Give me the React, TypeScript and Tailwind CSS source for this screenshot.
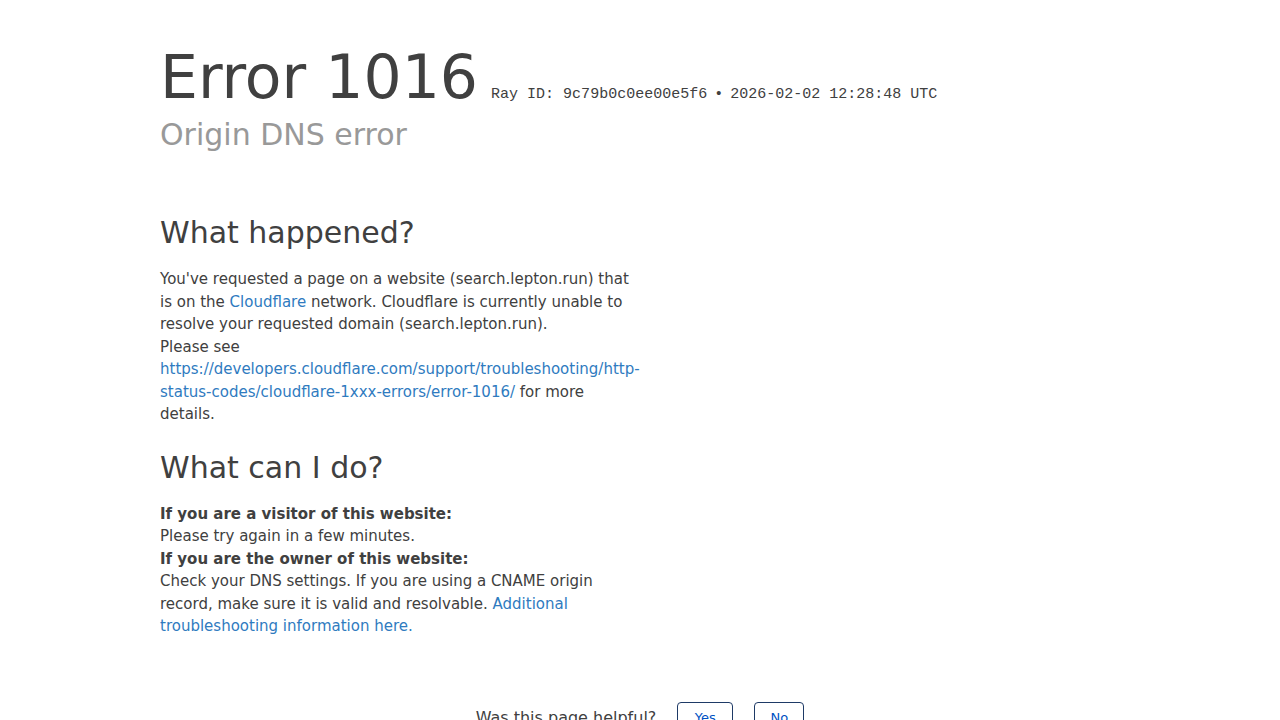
const sans = "font-['DejaVu_Sans',sans-serif]";

export default function App() {
  return (
    <div className={`min-h-screen bg-white text-[#404040] ${sans}`}>
      <div className="mx-auto w-[960px] pt-[47px]">
        <header>
          <h1 className="text-[60px] leading-[60px] font-normal whitespace-nowrap">
            Error 1016{" "}
            <small className="-ml-[6px] font-['Liberation_Mono',monospace] text-[15px] leading-none">
              Ray ID: 9c79b0c0ee00e5f6 <span className="-mx-[2px]">&bull;</span> 2026-02-02 12:28:48 UTC
            </small>
          </h1>
          <h2 className="mt-[10px] text-[30px] leading-[36px] text-[#999999]">Origin DNS error</h2>
        </header>

        <section className="w-[480px] text-[15px] leading-[22.5px]">
          <h2 className="mt-[62px] text-[30px] leading-[36px]">What happened?</h2>
          <p className="mt-[17px]">
            You've requested a page on a website (search.lepton.run) that is on the{" "}
            <a href="#" className="text-[#2f7bbf]">Cloudflare</a> network. Cloudflare is currently unable to
            resolve your requested domain (search.lepton.run).
            <br />
            Please see{" "}
            <a href="#" className="text-[#2f7bbf]">
              https://developers.cloudflare.com/support/troubleshooting/http-status-codes/cloudflare-1xxx-errors/error-1016/
            </a>{" "}
            for more details.
          </p>

          <h2 className="mt-[24px] text-[30px] leading-[36px]">What can I do?</h2>
          <div className="mt-[17px]">
            <p className="font-bold">If you are a visitor of this website:</p>
            <p>Please try again in a few minutes.</p>
            <p className="font-bold">If you are the owner of this website:</p>
            <p>
              Check your DNS settings. If you are using a CNAME origin record, make sure it is valid and
              resolvable.{" "}
              <a href="#" className="text-[#2f7bbf]">Additional troubleshooting information here.</a>
            </p>
          </div>
        </section>

        <div className="mt-[64px] flex items-start justify-center gap-[21px]">
          <span className="mt-[4px] text-[16px] text-[#404040]">Was this page helpful?</span>
          <button className="h-[32px] w-[56px] rounded-[4px] border border-[#1e3a66] text-[13px] text-[#0051c3]">
            Yes
          </button>
          <button className="h-[32px] w-[50px] rounded-[4px] border border-[#1e3a66] text-[13px] text-[#0051c3]">
            No
          </button>
        </div>
      </div>
    </div>
  );
}
